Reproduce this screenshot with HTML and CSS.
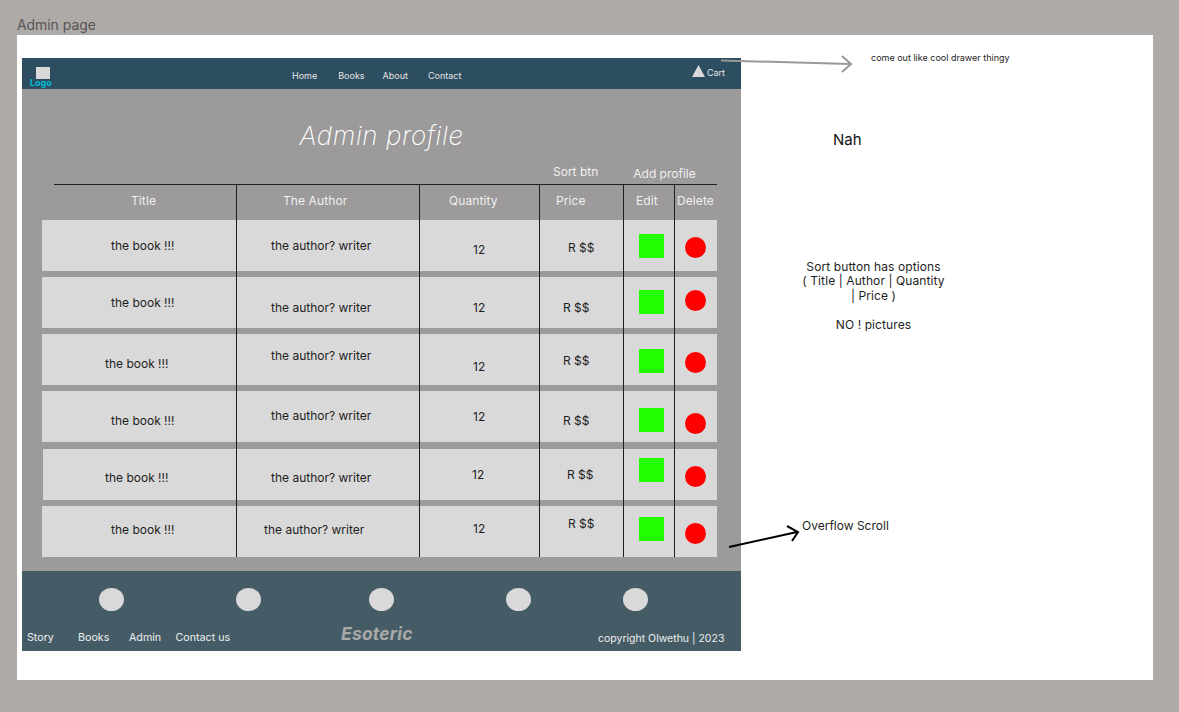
FILE: index.html
```html
<!DOCTYPE html>
<html lang="en">
<head>
<meta charset="utf-8">
<title>Admin page</title>
<link rel="stylesheet" href="styles.css">
</head>
<body>
<div class="canvas">
  <div class="frame-label">Admin page</div>
  <div class="frame">
    <div class="mock">
      <header class="nav">
        <div class="logo"><span class="logo-box"></span><span class="logo-text">Logo</span></div>
        <nav class="nav-links"><a>Home</a><a>Books</a><a>About</a><a>Contact</a></nav>
        <div class="cart"><svg class="cart-icon" width="13" height="12" viewBox="0 0 13 12"><path d="M6.5 0L13 12H0Z" fill="#d9d9d9"/></svg><span>Cart</span></div>
      </header>
      <main class="content">
        <h1 class="title">Admin profile</h1>
        <div class="actions"><span class="sort">Sort btn</span><span class="add">Add profile</span></div>
        <div class="table">
          <div class="head">
            <span class="h1">Title</span><span class="h2">The Author</span><span class="h3">Quantity</span><span class="h4">Price</span><span class="h5">Edit</span><span class="h6">Delete</span>
          </div>
          <div class="row r1"><div class="c ct">the book !!!</div><div class="c ca">the author? writer</div><div class="c cq">12</div><div class="c cp">R $$</div><div class="c ce"><i class="edit"></i></div><div class="c cd"><i class="del"></i></div></div>
          <div class="row r2"><div class="c ct">the book !!!</div><div class="c ca">the author? writer</div><div class="c cq">12</div><div class="c cp">R $$</div><div class="c ce"><i class="edit"></i></div><div class="c cd"><i class="del"></i></div></div>
          <div class="row r3"><div class="c ct">the book !!!</div><div class="c ca">the author? writer</div><div class="c cq">12</div><div class="c cp">R $$</div><div class="c ce"><i class="edit"></i></div><div class="c cd"><i class="del"></i></div></div>
          <div class="row r4"><div class="c ct">the book !!!</div><div class="c ca">the author? writer</div><div class="c cq">12</div><div class="c cp">R $$</div><div class="c ce"><i class="edit"></i></div><div class="c cd"><i class="del"></i></div></div>
          <div class="row r5"><div class="c ct">the book !!!</div><div class="c ca">the author? writer</div><div class="c cq">12</div><div class="c cp">R $$</div><div class="c ce"><i class="edit"></i></div><div class="c cd"><i class="del"></i></div></div>
          <div class="row r6"><div class="c ct">the book !!!</div><div class="c ca">the author? writer</div><div class="c cq">12</div><div class="c cp">R $$</div><div class="c ce"><i class="edit"></i></div><div class="c cd"><i class="del"></i></div></div>
          <div class="rules"><i></i><i></i><i></i><i></i><i></i></div>
        </div>
      </main>
      <footer class="footer">
        <div class="dots"><i></i><i></i><i></i><i></i><i></i></div>
        <div class="foot-row">
          <div class="foot-links"><a>Story</a><a>Books</a><a>Admin</a><a>Contact us</a></div>
          <div class="brand">Esoteric</div>
          <div class="copy">copyright Olwethu | 2023</div>
        </div>
      </footer>
    </div>
  </div>
  <svg class="arrows" width="1179" height="712" viewBox="0 0 1179 712" fill="none">
    <path d="M721 60.5L850 64M842 56L851 64L842 72" stroke="#999" stroke-width="2"/>
    <path d="M729 547L797 532M787 526L798 532L792 541" stroke="#000" stroke-width="2"/>
  </svg>
  <div class="note note-drawer">come out like cool drawer thingy</div>
  <div class="note note-nah">Nah</div>
  <div class="note note-sort">Sort button has options<br>( Title | Author | Quantity<br>| Price )<br><br>NO ! pictures</div>
  <div class="note note-scroll">Overflow Scroll</div>
</div>
</body>
</html>
```
FILE: styles.css
```css
* { box-sizing: border-box; }
html, body { margin: 0; height: 100%; overflow: hidden; }
body { background: #aeaaa8; font-family: Inter, "Liberation Sans", sans-serif; color: #1e1e1e; }
.canvas { position: relative; width: 1179px; height: 712px; padding: 17px 26px 0 17px; }
.frame-label { height: 17.5px; font-size: 13.9px; line-height: 16px; color: #555; }
.frame { background: #fff; height: 645.5px; padding: 23.5px 0 0 5px; }
.mock { width: 719px; height: 593px; display: flex; flex-direction: column; }

.nav { height: 31px; background: #2c4e60; display: flex; color: #e6e6e6; font-size: 9px; position: relative; }
.logo { width: 30px; margin-left: 8px; display: flex; flex-direction: column; align-items: flex-start; padding-top: 9px; }
.logo-box { width: 14px; height: 12px; background: #d9d9d9; flex: none; margin-left: 6px; }
.logo-text { font-size: 9px; font-weight: 700; line-height: 9px; color: #00bcd4; margin-top: -1px; }
.nav-links { display: flex; gap: 18px; margin-left: 232px; padding-top: 12px; line-height: 11px; }
.nav-links a:nth-child(2) { margin-left: 3px; }
.nav-links a:nth-child(4) { margin-left: 2px; }
.cart { margin-left: auto; display: flex; align-items: flex-start; gap: 2px; padding: 7px 16px 0 0; line-height: 15px; }
.cart-icon { flex: none; }

.content { height: 482px; background: #9c9a9a; color: #f0f0f0; display: flex; flex-direction: column; }
.title { margin: 0; padding-top: 31px; height: 75px; text-align: center; font-size: 26px; line-height: 31px; font-weight: 200; font-style: italic; letter-spacing: .55px; color: #fff; }
.actions { height: 20px; display: flex; font-size: 12px; line-height: 15px; padding-left: 531px; }
.add { margin-left: 35px; padding-top: 2px; }
.table { position: relative; margin: 0 24px 0 20px; flex: 1; }
.head { height: 36px; display: grid; grid-template-columns: 194px 183px 120px 84px 51px 43px; font-size: 12px; line-height: 15px; padding-top: 8px; border-top: 1px solid #1e1e1e; position: relative; letter-spacing: .1px; }
.head::before { content: ""; position: absolute; top: -1px; left: 0; width: 12px; height: 1px; background: #9c9a9a; }
.h1 { padding-left: 89px; }
.h2 { padding-left: 47px; }
.h3 { padding-left: 30px; }
.h4 { padding-left: 17px; }
.h5 { padding-left: 13px; }
.h6 { padding-left: 3px; }

.row { height: 51px; margin-bottom: 6px; background: #d9d9d9; display: grid; grid-template-columns: 194px 183px 120px 84px 51px 43px; color: #1e1e1e; font-size: 12px; line-height: 16px; }
.row.r4 { margin-bottom: 7px; }
.row.r5 { margin-left: 1px; grid-template-columns: 193px 183px 120px 84px 51px 43px; }
.edit { display: block; width: 25px; height: 24px; background: #22ff00; margin-left: 16px; }
.del { display: block; width: 21px; height: 21px; border-radius: 50%; background: #ff0000; margin-left: 11px; }

.r1 .ct { padding: 18px 0 0 69px; } .r1 .ca { padding: 18px 0 0 35px; } .r1 .cq { padding: 22px 0 0 54px; } .r1 .cp { padding: 20px 0 0 29px; } .r1 .ce { padding-top: 14px; } .r1 .cd { padding-top: 17px; }
.r2 .ct { padding: 18px 0 0 69px; } .r2 .ca { padding: 23px 0 0 35px; } .r2 .cq { padding: 23px 0 0 54px; } .r2 .cp { padding: 23px 0 0 24px; } .r2 .ce { padding-top: 13px; } .r2 .cd { padding-top: 13px; }
.r3 .ct { padding: 22px 0 0 63px; } .r3 .ca { padding: 14px 0 0 35px; } .r3 .cq { padding: 25px 0 0 54px; } .r3 .cp { padding: 19px 0 0 24px; } .r3 .ce { padding-top: 15px; } .r3 .cd { padding-top: 18px; }
.r4 .ct { padding: 22px 0 0 69px; } .r4 .ca { padding: 17px 0 0 35px; } .r4 .cq { padding: 18px 0 0 54px; } .r4 .cp { padding: 22px 0 0 24px; } .r4 .ce { padding-top: 17px; } .r4 .cd { padding-top: 22px; }
.r5 .ct { padding: 21px 0 0 62px; } .r5 .ca { padding: 21px 0 0 35px; } .r5 .cq { padding: 18px 0 0 53px; } .r5 .cp { padding: 18px 0 0 28px; } .r5 .ce { padding-top: 9px; } .r5 .cd { padding-top: 17px; }
.r6 .ct { padding: 16px 0 0 69px; } .r6 .ca { padding: 16px 0 0 28px; } .r6 .cq { padding: 15px 0 0 54px; } .r6 .cp { padding: 10px 0 0 29px; } .r6 .ce { padding-top: 11px; } .r6 .cd { padding-top: 17px; }

.rules { position: absolute; top: 0; left: 0; bottom: 14px; display: grid; grid-template-columns: 195px 183px 120px 84px 51px; pointer-events: none; }
.rules i { display: block; border-right: 1px solid #1e1e1e; }

.footer { flex: 1; background: #455c66; color: #eee; display: flex; flex-direction: column; }
.dots { display: flex; padding: 17px 0 0 77px; height: 50px; }
.dots i { display: block; flex: none; width: 25px; height: 23px; border-radius: 50%; background: #d9d9d9; margin-right: 112px; }
.dots i:nth-child(2) { margin-right: 108px; }
.dots i:nth-child(4) { margin-right: 92px; }
.foot-row { display: flex; font-size: 10.7px; line-height: 14px; }
.foot-links { display: flex; padding: 10px 0 0 5px; width: 319px; }
.foot-links a:nth-child(1) { width: 51px; }
.foot-links a:nth-child(2) { width: 51px; }
.foot-links a:nth-child(3) { width: 46.5px; }
.brand { font-size: 17.5px; font-weight: 700; font-style: italic; line-height: 22px; padding-top: 2px; color: #a9a9a9; width: 257px; letter-spacing: .2px; }
.copy { padding-top: 11px; font-size: 10.5px; white-space: nowrap; }

.arrows { position: absolute; left: 0; top: 0; pointer-events: none; }
.note { position: absolute; color: #1e1e1e; white-space: nowrap; }
.note-drawer { left: 871px; top: 52px; font-size: 9px; line-height: 12px; }
.note-nah { left: 833px; top: 131px; font-size: 15px; line-height: 18px; color: #111; }
.note-sort { left: 773.5px; width: 200px; top: 260px; text-align: center; font-size: 12px; line-height: 14.4px; letter-spacing: .1px; }
.note-scroll { left: 802px; top: 518px; font-size: 12px; line-height: 15px; }
```
